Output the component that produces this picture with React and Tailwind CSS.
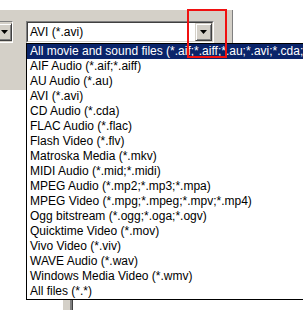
const items = [
  'All movie and sound files (*.aif;*.aiff;*.au;*.avi;*.cda;*.flac;*.flv;*.mkv;*.mid;*.midi)',
  'AIF Audio (*.aif;*.aiff)',
  'AU Audio (*.au)',
  'AVI (*.avi)',
  'CD Audio (*.cda)',
  'FLAC Audio (*.flac)',
  'Flash Video (*.flv)',
  'Matroska Media (*.mkv)',
  'MIDI Audio (*.mid;*.midi)',
  'MPEG Audio (*.mp2;*.mp3;*.mpa)',
  'MPEG Video (*.mpg;*.mpeg;*.mpv;*.mp4)',
  'Ogg bitstream (*.ogg;*.oga;*.ogv)',
  'Quicktime Video (*.mov)',
  'Vivo Video (*.viv)',
  'WAVE Audio (*.wav)',
  'Windows Media Video (*.wmv)',
  'All files (*.*)',
];

function Arrow() {
  return (
    <svg width="7" height="4" viewBox="0 0 7 4">
      <path d="M0 0h7L3.5 4z" fill="#000" />
    </svg>
  );
}

function DropButton({ className = '' }) {
  return (
    <div
      className={`flex items-center justify-center bg-[#d4d0c8] border border-t-[#d4d0c8] border-l-[#d4d0c8] border-r-[#404040] border-b-[#404040] shadow-[inset_1px_1px_0_#fff,inset_-1px_-1px_0_#808080] ${className}`}
    >
      <Arrow />
    </div>
  );
}

export default function App() {
  return (
    <div
      className="relative w-[303px] h-[310px] overflow-hidden bg-white text-[12px] text-black"
      style={{ fontFamily: '"Liberation Sans", Arial, sans-serif' }}
    >
      <div className="pt-[10px]">
        <div className="w-[233px] h-[80px] bg-[#d4d0c8] border-r border-r-[#808080] pt-[11px] flex">
          <div className="-ml-[6px] w-[19px] h-[22px] border border-t-[#808080] border-l-[#808080] border-r-white border-b-white p-px">
            <DropButton className="w-[16px] h-[18px]" />
          </div>
          <div className="ml-[13px] w-[188px] h-[22px] border border-t-[#808080] border-l-[#808080] border-r-white border-b-white">
            <div className="h-full flex items-center bg-white border border-t-[#404040] border-l-[#404040] border-r-[#d4d0c8] border-b-[#d4d0c8]">
              <span className="pl-[2px] flex-1 leading-none">AVI (*.avi)</span>
              <DropButton className="w-[17px] h-[18px]" />
            </div>
          </div>
        </div>
        <div className="mt-[210px] ml-[63px] w-[10px] h-[10px] flex">
          <div className="w-[7px] bg-[#d4d0c8]" />
          <div className="w-[2px] bg-[#808080]" />
          <div className="w-px bg-[#404040]" />
        </div>
      </div>

      <ul className="absolute left-[26px] top-[43px] w-[290px] border border-black bg-white">
        {items.map((t, i) => (
          <li
            key={t}
            className={`h-[15px] leading-[15px] pl-[3px] whitespace-nowrap ${i === 0 ? 'bg-[#0a246a] text-white' : ''}`}
          >
            {t}
          </li>
        ))}
      </ul>

      <div className="absolute left-[187px] top-[9px] w-[40px] h-[49px] border-2 border-[#f01010]" />
    </div>
  );
}
